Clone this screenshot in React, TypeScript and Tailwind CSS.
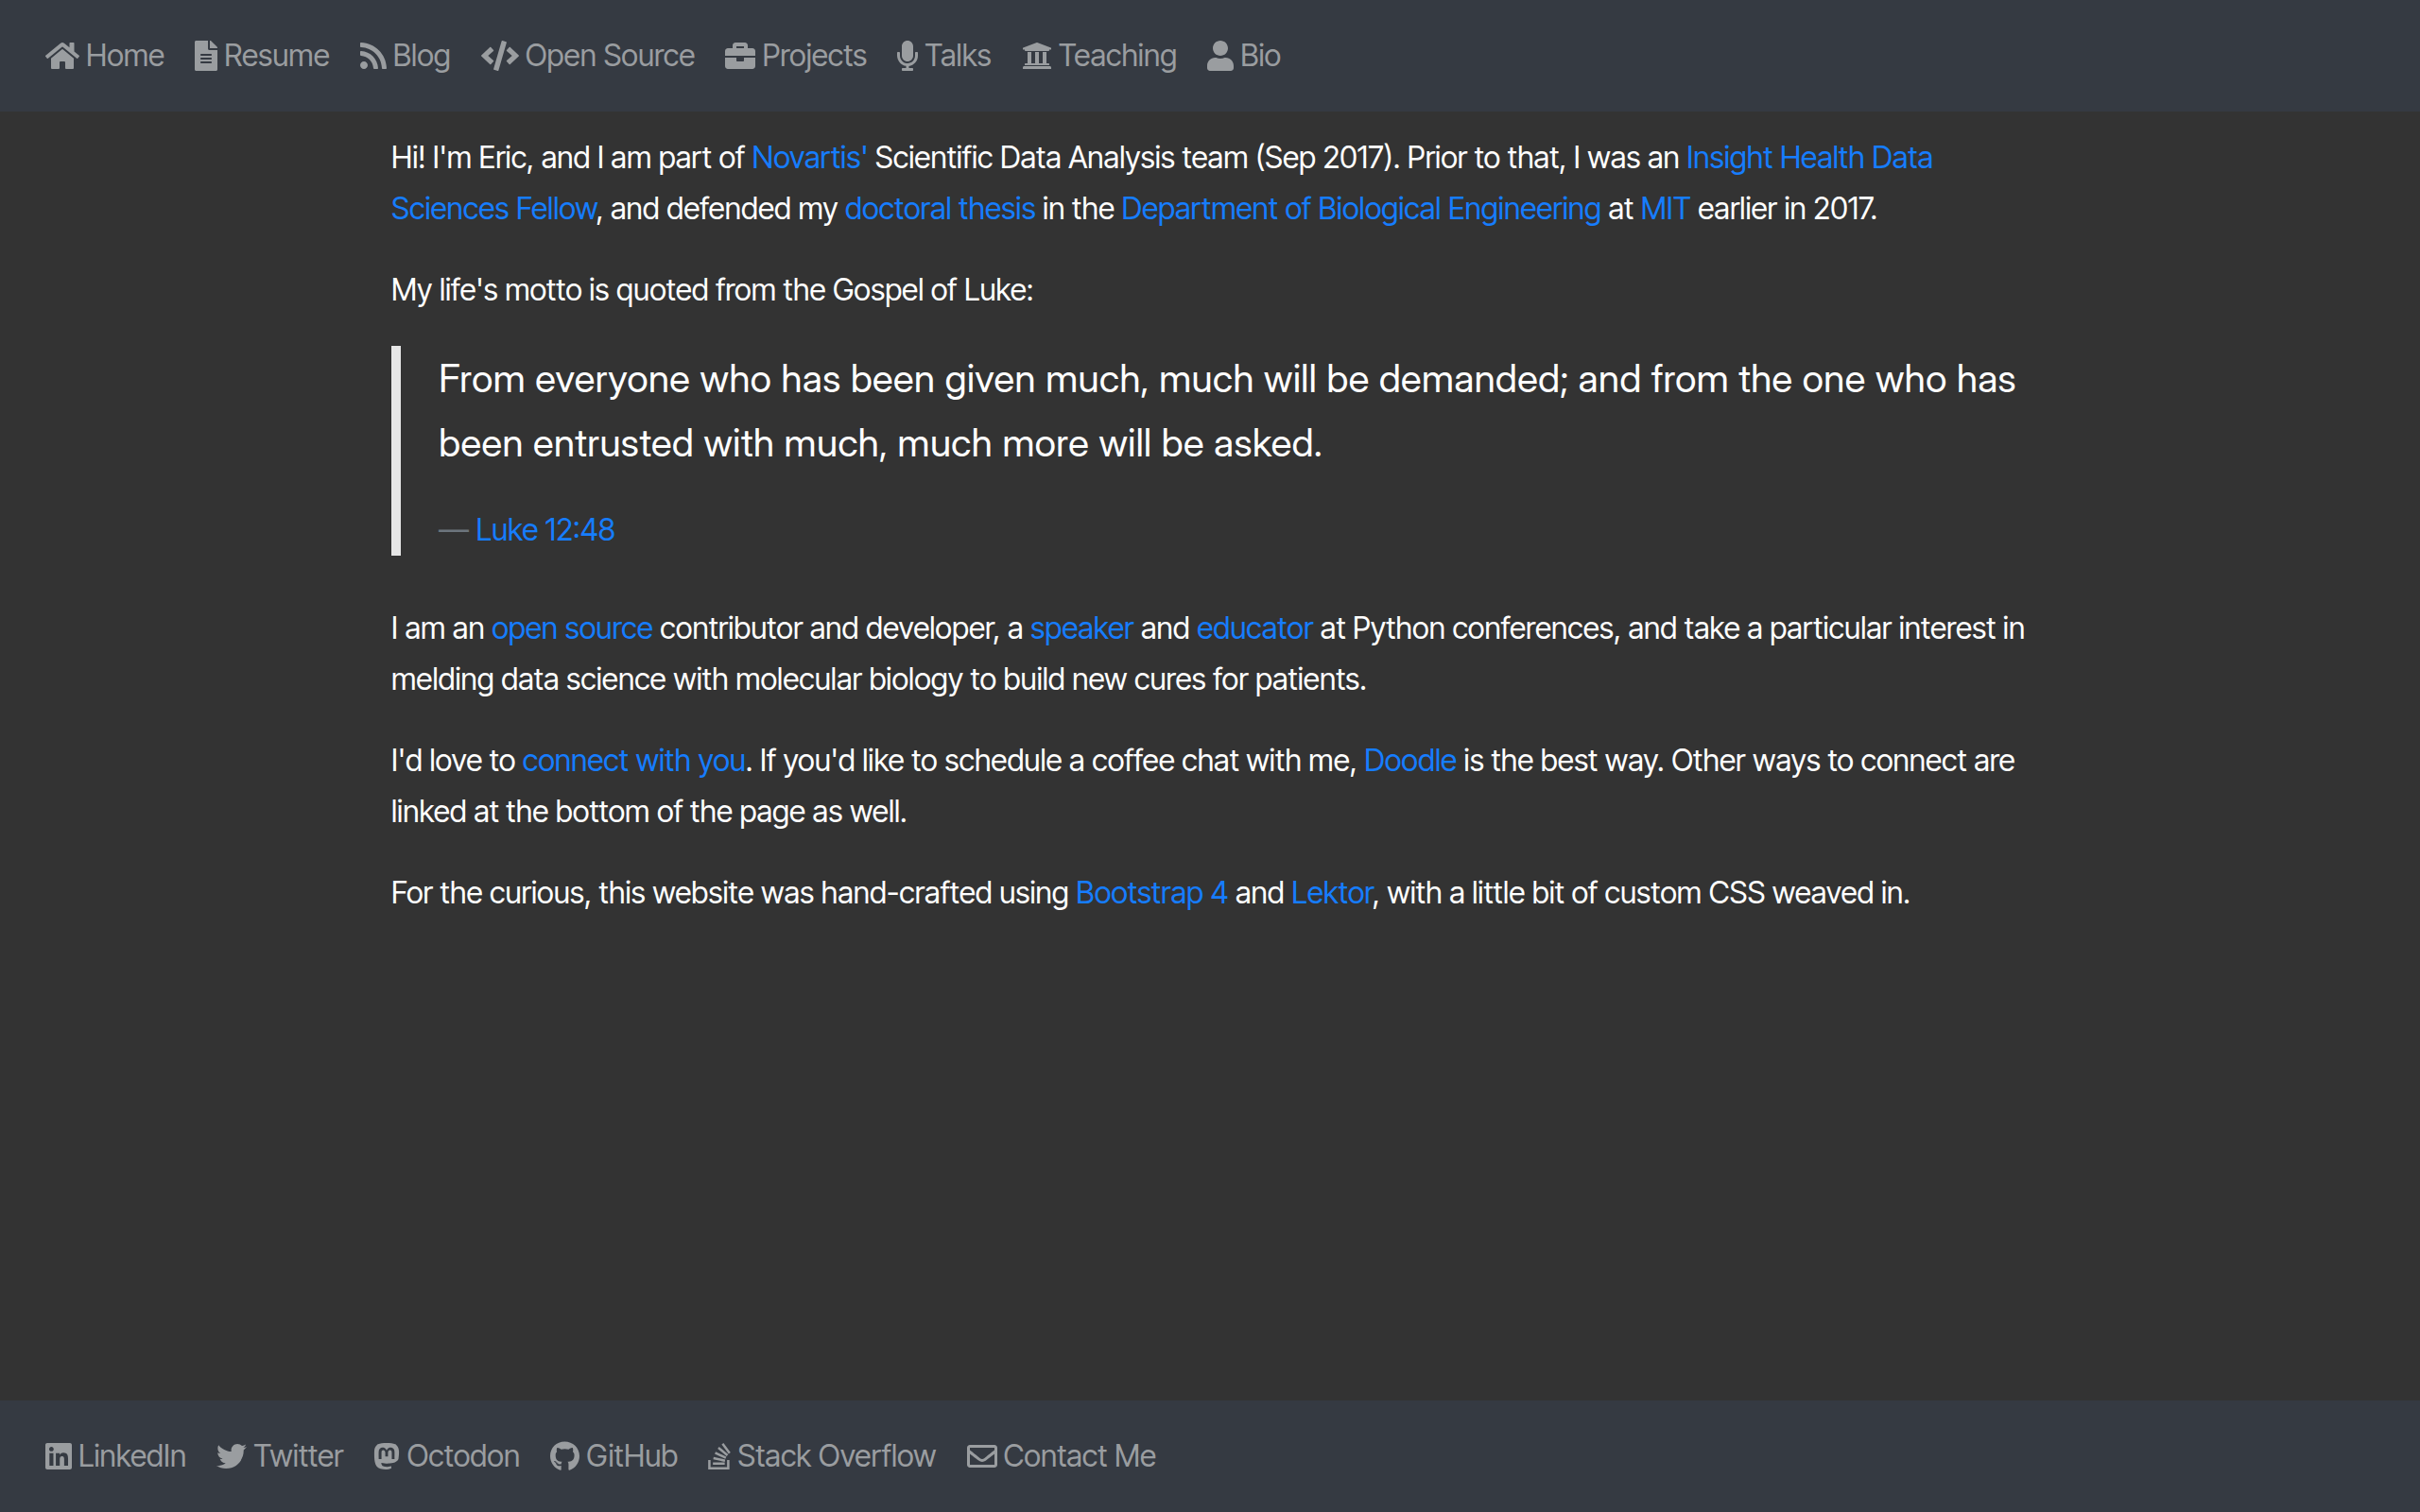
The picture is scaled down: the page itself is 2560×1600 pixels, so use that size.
import type { ReactNode } from "react"
import type { IconType } from "react-icons"
import {
  FaBriefcase,
  FaCode,
  FaFileAlt,
  FaGithub,
  FaHome,
  FaLinkedin,
  FaMastodon,
  FaMicrophone,
  FaRegEnvelope,
  FaRss,
  FaStackOverflow,
  FaTwitter,
  FaUniversity,
  FaUser,
} from "react-icons/fa"

type NavItem = { label: string; icon: IconType; iconClass: string }

const pages: NavItem[] = [
  { label: "Home", icon: FaHome, iconClass: "w-9" },
  { label: "Resume", icon: FaFileAlt, iconClass: "w-6" },
  { label: "Blog", icon: FaRss, iconClass: "w-7" },
  { label: "Open Source", icon: FaCode, iconClass: "w-10" },
  { label: "Projects", icon: FaBriefcase, iconClass: "w-8" },
  { label: "Talks", icon: FaMicrophone, iconClass: "w-[22px]" },
  { label: "Teaching", icon: FaUniversity, iconClass: "w-8" },
  { label: "Bio", icon: FaUser, iconClass: "w-7" },
]

const contacts: NavItem[] = [
  { label: "LinkedIn", icon: FaLinkedin, iconClass: "w-7" },
  { label: "Twitter", icon: FaTwitter, iconClass: "w-8" },
  { label: "Octodon", icon: FaMastodon, iconClass: "w-7" },
  { label: "GitHub", icon: FaGithub, iconClass: "w-[31px]" },
  { label: "Stack Overflow", icon: FaStackOverflow, iconClass: "w-6" },
  { label: "Contact Me", icon: FaRegEnvelope, iconClass: "w-8" },
]

function NavBar({ items, label }: { items: NavItem[]; label: string }) {
  return (
    <nav aria-label={label} className="bg-[#353a42] px-12 py-8">
      <ul className="flex flex-wrap gap-x-8">
        {items.map(({ label, icon: Icon, iconClass }) => (
          <li key={label}>
            <a href="#" className="flex items-center gap-[7px] text-[#9a9da0] hover:text-white">
              <Icon className={`h-8 shrink-0 ${iconClass}`} aria-hidden="true" />
              {label}
            </a>
          </li>
        ))}
      </ul>
    </nav>
  )
}

function TextLink({ children }: { children: ReactNode }) {
  return (
    <a href="#" className="text-[#167dff] hover:underline">
      {children}
    </a>
  )
}

export default function App() {
  return (
    <div className="flex min-h-screen flex-col bg-[#333333] font-['Inter_Tight','Inter',sans-serif] text-[32px] leading-[54px] text-white">
      <header>
        <NavBar items={pages} label="Main" />
      </header>
      <main className="mx-auto flex w-full max-w-[1732px] grow flex-col gap-8 pt-[22px]">
        <p>
          Hi! I'm Eric, and I am part of <TextLink>Novartis'</TextLink> Scientific Data Analysis team (Sep 2017). Prior
          to that, I was an <TextLink>Insight Health Data Sciences Fellow</TextLink>, and defended my{" "}
          <TextLink>doctoral thesis</TextLink> in the <TextLink>Department of Biological Engineering</TextLink> at{" "}
          <TextLink>MIT</TextLink> earlier in 2017.
        </p>
        <p>My life's motto is quoted from the Gospel of Luke:</p>
        <blockquote className="mb-[18px] flex flex-col gap-8 border-l-[10px] border-[#e6e6e6] pl-10">
          <p className="font-['Inter_Display','Inter',sans-serif] text-[41px] leading-[68px]">
            From everyone who has been given much, much will be demanded; and from the one who has been entrusted with
            much, much more will be asked.
          </p>
          <footer className="text-[#6c757d]">
            — <TextLink>Luke 12:48</TextLink>
          </footer>
        </blockquote>
        <p>
          I am an <TextLink>open source</TextLink> contributor and developer, a <TextLink>speaker</TextLink> and{" "}
          <TextLink>educator</TextLink> at Python conferences, and take a particular interest in melding data science
          with molecular biology to build new cures for patients.
        </p>
        <p>
          I'd love to <TextLink>connect with you</TextLink>. If you'd like to schedule a coffee chat with me,{" "}
          <TextLink>Doodle</TextLink> is the best way. Other ways to connect are linked at the bottom of the page as
          well.
        </p>
        <p>
          For the curious, this website was hand-crafted using <TextLink>Bootstrap 4</TextLink> and{" "}
          <TextLink>Lektor</TextLink>, with a little bit of custom CSS weaved in.
        </p>
      </main>
      <footer>
        <NavBar items={contacts} label="Contact" />
      </footer>
    </div>
  )
}
